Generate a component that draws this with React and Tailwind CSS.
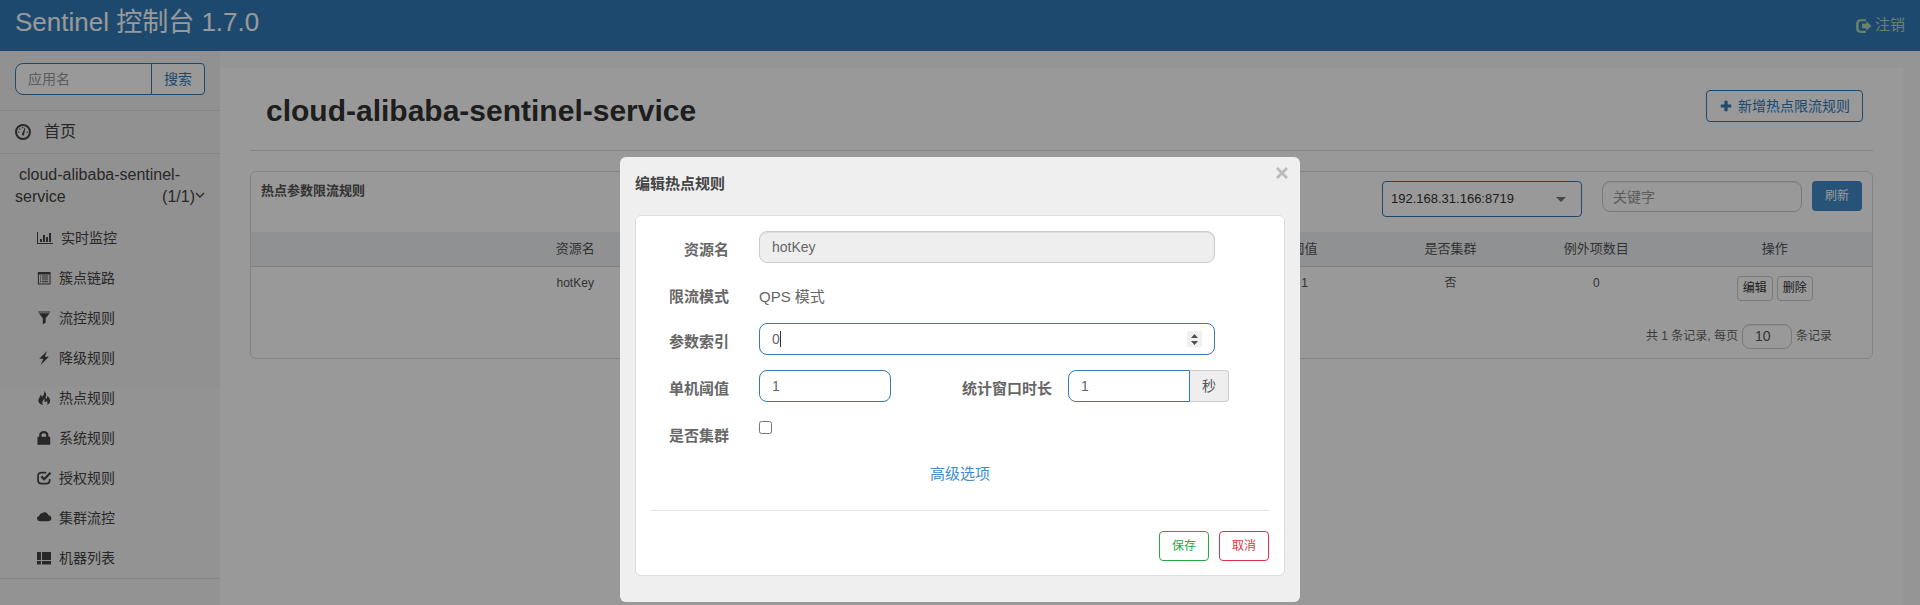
import React from 'react';

const ICONS = {
  dashboard: (
    <>
      <circle cx="8" cy="8" r="7" fill="none" stroke="currentColor" strokeWidth="2" />
      <path d="M7 9.800 9.700 3.800l.7.3-1.200 6a1.200 1.200 0 1 1-2.200-.3ZM3 7.500h1.400v1.300H3zM4.300 4.400h1.300v1.300H4.300zM7 3h1.300v1.300H7zM11.600 7.500H13v1.300h-1.400z" />
    </>
  ),
  stats: <path d="M0 2h1v11h15v1H0zM3 9h2v3H3zM6 5h2v7H6zM9 7h2v5H9zM12 3h2v9h-2z" />,
  listAlt: (
    <path
      fillRule="evenodd"
      d="M1 1h14.500v14.500H1zM2.200 4v10.300h12.100V4zM3.500 5.200h1.300v1.200H3.500zM3.500 7.400h1.300v1.200H3.500zM3.500 9.600h1.300v1.200H3.500zM3.500 11.800h1.300v1.100H3.500zM5.800 5.200h7v1.100h-7zM5.800 7.400h7v1.100h-7zM5.800 9.600h7v1.100h-7zM5.800 11.800h7v1.100h-7z"
    />
  ),
  filter: <path d="M1.500.5h13.500v1.200H1.500zM2.200 2.500h12.200L9.900 8.300v4.800l-3.300 2.400V8.300z" />,
  flash: <path d="M11.500 0 2.500 8.800h4.700L4.200 16 13.500 6.700H8.900z" />,
  fire: (
    <path d="M8.2 0c1.800 1.500 2.600 3.300 2.200 5.200-.3 1.200-.9 1.900-.6 2.900.3.800 1.200.8 1.600.2.400-.7.3-1.700 0-2.600 2.300 1.100 3.600 3.100 3.600 5.300 0 2.400-1.500 4.200-3.800 4.800 1.100-1.600 1.100-3.200-.2-5-.2 1.400-.9 2-1.600 1.900-.8-.1-1.100-1-.8-2.100.1-.9 0-1.500-.4-2.100-.2 1.800-2.200 2.700-2.200 4.800 0 1 .4 1.900 1.100 2.600C3.900 15.600 1.500 13.800 1.500 11.200c0-3.200 2.300-4.200 2.500-7 1 .7 1.400 1.700 1.400 2.700C7.600 5.300 8.900 2.900 8.200 0Z" />
  ),
  lock: <path fillRule="evenodd" d="M.5 6.500h2V5.200C2.500 1.900 4.300 0 7.800 0s5.300 1.900 5.300 5.200v1.300h2v9.300H.5zM5.200 6.500h5.200V5c0-1.600-.8-2.500-2.600-2.500S5.200 3.400 5.200 5z" />,
  check: (
    <>
      <path d="M10.500 1.800H5.200C2.800 1.800 1.200 3.300 1.200 5.600v5c0 2.300 1.600 3.800 4 3.800h5.300c2.400 0 4-1.500 4-3.800V9" fill="none" stroke="currentColor" strokeWidth="2" />
      <path d="m5 6.200 3.200 3.200L15.400 2" fill="none" stroke="currentColor" strokeWidth="2.600" />
    </>
  ),
  cloud: <path d="M3.800 11.800C1.500 11.800 0 10.500 0 8.700c0-1.600 1.100-2.700 2.600-2.900C2.700 4 3.900 2.900 5.500 2.700 6.400 1.700 7.400 1.300 8.600 1.300c2.400 0 4 1.500 4.500 3.600 1.900.2 3.300 1.600 3.300 3.400 0 2-1.600 3.500-3.700 3.500z" />,
  thList: <path d="M0 1h4.500v9.200H0zM5.700 1H16v9.200H5.700zM0 11.400h4.500v4.100H0zM5.700 11.400H16v4.100H5.700z" />,
  logout: (
    <path d="M6 1.200h5v2.100H6.200c-1.900 0-2.600.8-2.600 2.500v4.500c0 1.700.7 2.500 2.600 2.500H11v2.100H6c-3.200 0-4.900-1.600-4.900-4.600V5.800c0-3 1.700-4.600 4.900-4.600ZM7 5.800h4.300V3.200L16.500 8l-5.200 4.800v-2.600H7z" />
  ),
  plus: <path d="M6.200 2h3.600v4.200H14v3.600H9.800V14H6.200V9.800H2V6.200h4.200z" />,
};

function Icon({ name, className }) {
  return (
    <svg viewBox="0 0 16 16" fill="currentColor" aria-hidden="true" className={`shrink-0 overflow-visible ${className}`}>
      {ICONS[name]}
    </svg>
  );
}

const MENU = [
  ['stats', '实时监控'],
  ['listAlt', '簇点链路'],
  ['filter', '流控规则'],
  ['flash', '降级规则'],
  ['fire', '热点规则'],
  ['lock', '系统规则'],
  ['check', '授权规则'],
  ['cloud', '集群流控'],
  ['thList', '机器列表'],
];

function Header() {
  return (
    <header className="flex h-[51px] items-center justify-between bg-[#337ab7] px-[15px]">
      <a href="#" className="pb-2 text-[26px] leading-8 text-white">Sentinel 控制台 1.7.0</a>
      <a href="#" className="flex items-center gap-1 text-[15px] text-[#b4d8b4]">
        <Icon name="logout" className="size-4" />
        注销
      </a>
    </header>
  );
}

function Sidebar() {
  return (
    <aside className="w-[220px] shrink-0 bg-[linear-gradient(#f2f2f2_336px,#f6f6f6_336px)] text-[#444]">
      <form className="flex border-b border-[#e0e0e0] px-[15px] pt-3 pb-[15px]">
        <input
          type="text"
          aria-label="应用名"
          placeholder="应用名"
          className="h-8 w-0 flex-1 rounded-l-lg border border-[#337ab7] bg-white px-3 text-sm placeholder:text-[#999]"
        />
        <button type="button" className="-ml-px h-8 w-[54px] rounded-r border border-[#337ab7] bg-white text-sm text-[#337ab7]">
          搜索
        </button>
      </form>
      <nav>
        <a href="#" className="flex h-[43px] items-center gap-[13px] border-b border-[#e0e0e0] px-[15px] text-base">
          <Icon name="dashboard" className="size-4" />
          首页
        </a>
        <a href="#" className="block px-[15px] py-[10px] text-base leading-[22px]">
          <span className="block pl-1">cloud-alibaba-sentinel-</span>
          <span className="flex justify-between">
            service
            <span className="flex items-center">
              (1/1)
              <svg viewBox="0 0 10 10" className="size-[10px]" fill="none" stroke="currentColor" strokeWidth="1.400" aria-hidden="true">
                <path d="m1 1 4 4 4-4" />
              </svg>
            </span>
          </span>
        </a>
        <ul className="border-b border-[#e0e0e0]">
          {MENU.map(([icon, label]) => (
            <li key={label}>
              <a href="#" className="flex h-10 items-center gap-2 pl-[37px] text-sm">
                <Icon name={icon} className={icon === 'stats' ? 'size-4' : 'size-[14px]'} />
                {label}
              </a>
            </li>
          ))}
        </ul>
      </nav>
    </aside>
  );
}

function RulesTable() {
  return (
    <section className="overflow-hidden rounded-md border border-[#ddd]">
      <div className="flex h-[60px] items-start px-[10px] pt-[9px]">
        <h2 className="flex-1 text-[13px] leading-5 font-bold text-[#555]">热点参数限流规则</h2>
        <div className="relative">
          <select aria-label="机器" className="h-9 w-[200px] appearance-none rounded border border-[#337ab7] bg-white px-2 text-[13px] text-[#333]">
            <option>192.168.31.166:8719</option>
          </select>
          <span className="pointer-events-none absolute top-4 right-4 border-x-[5px] border-t-[5px] border-x-transparent border-t-[#777]" />
        </div>
        <input
          type="text"
          aria-label="关键字"
          placeholder="关键字"
          className="ml-5 h-[31px] w-[200px] rounded-lg border border-[#ccc] bg-white px-[10px] text-sm shadow-[inset_0_1px_1px_rgba(0,0,0,0.075)] placeholder:text-[#999]"
        />
        <button type="button" className="ml-[10px] h-[30px] w-[50px] rounded bg-[#428bca] text-xs text-white">刷新</button>
      </div>
      <table className="w-full table-fixed text-center text-[13px] text-[#555]">
        <colgroup>
          <col className="w-[40%]" />
          <col className="w-[11%]" />
          <col className="w-[9.500%]" />
          <col className="w-[9%]" />
          <col className="w-[9%]" />
          <col className="w-[9%]" />
          <col />
        </colgroup>
        <thead>
          <tr className="h-[34px] border-b border-[#d5d5d5] bg-[#f0f2f5]">
            {['资源名', '参数索引', '流控模式', '阈值', '是否集群', '例外项数目', '操作'].map((h) => (
              <th key={h} className="p-0 pb-px font-normal last:pl-2">{h}</th>
            ))}
          </tr>
        </thead>
        <tbody>
          <tr className="align-top text-xs leading-4">
            <td className="pt-2">hotKey</td>
            <td className="pt-2">0</td>
            <td className="pt-2">QPS</td>
            <td className="pt-2">1</td>
            <td className="pt-2">否</td>
            <td className="pt-2">0</td>
            <td className="pt-[9px] pl-2">
              <div className="flex justify-center gap-1">
                <button type="button" className="h-[25px] w-9 rounded-sm border border-[#ccc] bg-white text-xs text-[#333]">编辑</button>
                <button type="button" className="h-[25px] w-9 rounded-sm border border-[#ccc] bg-white text-xs text-[#333]">删除</button>
              </div>
            </td>
          </tr>
        </tbody>
      </table>
      <div className="flex items-center justify-end gap-1 pt-[23px] pr-10 pb-[9px] text-[12px] leading-5 text-[#666]">
        <span>共 1 条记录, 每页</span>
        <input type="text" aria-label="每页记录数" defaultValue="10" className="h-[25px] w-[50px] rounded-lg border border-[#ccc] bg-white px-3 text-sm text-[#555] shadow-[inset_0_1px_1px_rgba(0,0,0,0.075)]" />
        <span>条记录</span>
      </div>
    </section>
  );
}

const FIELD = 'h-8 border px-3 text-sm text-[#666] outline-none';
const NUMBER = '[appearance:textfield] border-[#337ab7] bg-white [&::-webkit-inner-spin-button]:appearance-none';
const LABEL = 'text-right text-[15px] leading-[38px] font-bold text-[#666]';

function EditDialog() {
  return (
    <div className="fixed inset-0 flex items-start justify-center bg-black/40 pt-[157px]">
      <div role="dialog" aria-labelledby="dialog-title" className="w-[680px] rounded-md bg-[#efefef] px-[15px] pb-[26px]">
        <div className="flex h-[58px] items-start justify-between">
          <h2 id="dialog-title" className="pt-[17px] text-[15px] leading-5 font-bold text-[#444]">编辑热点规则</h2>
          <button type="button" aria-label="关闭" className="-mr-[13px] flex h-8 w-8 items-center justify-center text-[#bbb]">
            <svg viewBox="0 0 12 12" className="size-3" stroke="currentColor" strokeWidth="2.800" aria-hidden="true">
              <path d="m1 1 10 10M11 1 1 11" />
            </svg>
          </button>
        </div>
        <form className="rounded-md border border-[#ddd] bg-white px-[15px] pt-[15px] pb-[14px]">
          <div className="grid grid-cols-[78px_1fr] items-start gap-x-[30px] pr-[54px]">
            <label htmlFor="resource" className={LABEL}>资源名</label>
            <input id="resource" type="text" disabled defaultValue="hotKey" className={`${FIELD} mb-[15px] rounded-lg border-[#ccc] bg-[#eee] shadow-[inset_0_1px_1px_rgba(0,0,0,0.075)]`} />
            <span className={LABEL}>限流模式</span>
            <span className="mb-[7px] text-[15px] leading-[38px] text-[#666]">QPS 模式</span>
            <label htmlFor="param-index" className={LABEL}>参数索引</label>
            <div className="relative mb-[15px]">
              <input id="param-index" type="number" autoFocus defaultValue="0" className={`${FIELD} ${NUMBER} block w-full rounded-lg caret-transparent`} />
              <span className="pointer-events-none absolute top-2 left-[21px] h-4 w-px bg-[#333]" />
              <svg viewBox="0 0 15 16" className="pointer-events-none absolute top-2 right-[13px] h-4 w-[15px] bg-[#f0f0f0]" fill="#505050" aria-hidden="true">
                <path d="M4 7 7.500 3 11 7zM4 10h7l-3.500 4z" />
              </svg>
            </div>
            <label htmlFor="threshold" className={LABEL}>单机阈值</label>
            <div className="-mr-[54px] mb-[15px] flex h-8">
              <input id="threshold" type="number" defaultValue="1" className={`${FIELD} ${NUMBER} w-[132px] rounded-lg`} />
              <label htmlFor="window" className={`${LABEL} w-[161px]`}>统计窗口时长</label>
              <input id="window" type="number" defaultValue="1" className={`${FIELD} ${NUMBER} ml-4 w-[122px] rounded-l-lg`} />
              <span className="flex h-8 w-[39px] items-center justify-center rounded-r border border-l-0 border-[#ccc] bg-[#eee] text-sm text-[#555]">秒</span>
            </div>
            <label htmlFor="cluster" className={LABEL}>是否集群</label>
            <input id="cluster" type="checkbox" className="mt-1 size-[13px]" />
          </div>
          <div className="border-b border-[#e5e5e5] pt-[9px] pb-[26px] text-center leading-5">
            <a href="#" className="text-[15px] text-[#428bca]">高级选项</a>
          </div>
          <div className="flex justify-end gap-[10px] pt-5">
            <button type="button" className="h-[30px] w-[50px] rounded border border-[#28a745] bg-white text-xs text-[#28a745]">保存</button>
            <button type="button" className="h-[30px] w-[50px] rounded border border-[#dc3545] bg-white text-xs text-[#dc3545]">取消</button>
          </div>
        </form>
      </div>
    </div>
  );
}

export default function App() {
  return (
    <div className="flex min-h-screen flex-col bg-[#f8f8f8] font-['Liberation_Sans','Noto_Sans_CJK_SC',sans-serif]">
      <Header />
      <div className="flex flex-1">
        <Sidebar />
        <main className="mt-[17px] mr-[17px] flex-1 bg-white px-[30px]">
          <div className="flex items-start justify-between border-b border-[#ddd] pt-[22px] pr-[10px] pb-[18px] pl-4">
            <h1 className="text-[30px] leading-[42px] font-bold text-[#333]">cloud-alibaba-sentinel-service</h1>
            <button type="button" className="flex h-8 items-center gap-[5px] rounded border border-[#337ab7] bg-white px-3 text-sm text-[#337ab7]">
              <Icon name="plus" className="size-[14px]" />
              新增热点限流规则
            </button>
          </div>
          <div className="pt-5">
            <RulesTable />
          </div>
        </main>
      </div>
      <EditDialog />
    </div>
  );
}
